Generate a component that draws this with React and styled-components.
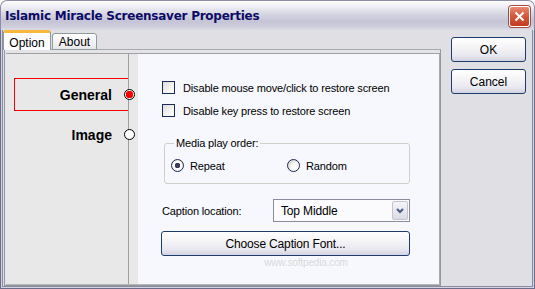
import styled, { createGlobalStyle } from "styled-components";

const GlobalStyle = createGlobalStyle`
  html, body { margin: 0; padding: 0; background: #fff; }
  body { font-family: "Liberation Sans", Arial, sans-serif; font-size: 11px; color: #000; }
  * { box-sizing: border-box; }
`;

const Window = styled.div`
  width: 535px;
  height: 289px;
  display: flex;
  flex-direction: column;
`;

const TitleBar = styled.div`
  height: 30px;
  flex: none;
  display: flex;
  align-items: center;
  justify-content: space-between;
  padding: 0 4px 0 4px;
  border-radius: 7px 7px 0 0;
  border: 1px solid #8e8eaa;
  border-bottom: 0;
  background: linear-gradient(180deg, #fdfdfe 0%, #f0f0f5 18%, #d6d6e2 45%, #c4c4d6 70%, #cfcfdd 90%, #dcdce6 100%);
`;

const Title = styled.span`
  font: bold 12px "DejaVu Sans", Verdana, sans-serif;
  color: #0c0c66;
  letter-spacing: -0.25px;
  margin-top: 1px;
`;

const CloseBtn = styled.div`
  width: 21px;
  height: 21px;
  margin-top: 1px;
  border-radius: 3px;
  border: 1px solid #fff;
  box-shadow: 0 0 0 1px #a84a3c;
  background: linear-gradient(180deg, #e88a74 0%, #d65a40 45%, #c23a20 100%);
  display: flex;
  align-items: center;
  justify-content: center;
`;

const Frame = styled.div`
  flex: 1;
  display: flex;
  border: solid #6c6c8a;
  border-width: 0 1px 1px;
`;

const FrameMid = styled.div`
  flex: 1;
  display: flex;
  border: solid #d4d4e0;
  border-width: 0 1px 1px;
`;

const Client = styled.div`
  flex: 1;
  display: flex;
  gap: 9px;
  background: #e0dfe3;
  border: solid #8a8aa6;
  border-width: 0 1px 1px;
  padding: 1px 0 0 0;
`;

const Main = styled.div`
  width: 439px;
  display: flex;
  flex-direction: column;
`;

const TabRow = styled.div`
  height: 19px;
  display: flex;
  align-items: flex-end;
  position: relative;
  z-index: 1;
  margin-bottom: -1px;
`;

const Tab = styled.div`
  height: ${(p) => (p.$active ? "20px" : "17px")};
  width: ${(p) => p.$w}px;
  margin-right: ${(p) => (p.$active ? "1px" : "0")};
  display: flex;
  align-items: center;
  justify-content: center;
  font-size: 12px;
  padding-top: ${(p) => (p.$active ? "2px" : "1px")};
  border: 1px solid #919b9c;
  border-bottom: ${(p) => (p.$active ? "0" : "1px solid #919b9c")};
  border-radius: 3px 3px 0 0;
  background: ${(p) =>
    p.$active ? "#fcfcfe" : "linear-gradient(180deg, #ffffff, #f3f3f6 60%, #e6e6ea)"};
  border-top: ${(p) => (p.$active ? "3px solid #f7b83c" : "1px solid #919b9c")};
`;

const Panel = styled.div`
  flex: 1;
  margin-left: 1px;
  margin-right: 1px;
  border: 1px solid #919b9c;
  border-top-color: #a6acad;
  background: #e4e3e8;
  padding: 3px 0 0 1px;
  display: flex;
`;

const PageBody = styled.div`
  flex: 1;
  display: flex;
  border-top: 1px solid #a0a0a0;
  border-bottom: 1px solid #b4b4b4;
`;

const Sidebar = styled.div`
  width: 123px;
  background: #e8e8e8;
  border-right: 1px solid #a0a0a0;
  padding: 24px 0 0 8px;
  display: flex;
  flex-direction: column;
  gap: 7px;
`;

const NavItem = styled.div`
  position: relative;
  height: 33px;
  display: flex;
  align-items: center;
  justify-content: flex-end;
  padding-right: 16px;
  font: bold 14px "Liberation Sans", Arial, sans-serif;
  border: 1px solid ${(p) => (p.$active ? "#ff0000" : "transparent")};
  border-right: 0;
`;

const NavDot = styled.span`
  position: absolute;
  right: -7px;
  top: 50%;
  width: 11px;
  height: 11px;
  margin-top: -6px;
  border-radius: 50%;
  border: 1px solid #000;
  background: ${(p) => (p.$active ? "radial-gradient(circle, #ff0000 0 3.5px, #fff 4px)" : "#fff")};
`;

const Strip = styled.div`
  width: 9px;
  background: #e8e8e8;
`;

const Content = styled.div`
  flex: 1;
  background: #f7f8fd;
  border-right: 1px solid #a8a8a8;
  padding: 27px 29px 0 24px;
  display: flex;
  flex-direction: column;
  letter-spacing: -0.15px;
`;

const CheckRow = styled.label`
  display: flex;
  align-items: center;
  gap: 8px;
  height: 13px;
  margin-bottom: 10px;
  font-size: 11px;
`;

const CheckBox = styled.span`
  width: 13px;
  height: 13px;
  border: 1px solid #1c2a5a;
  background: linear-gradient(135deg, #dcdcd8 0%, #f4f4f2 60%, #ffffff 100%);
`;

const Group = styled.fieldset`
  margin: 10px 0 0 2px;
  padding: 9px 0 11px 6px;
  border: 1px solid #d0d0c8;
  border-radius: 3px;
  display: grid;
  grid-template-columns: 116px 1fr;
`;

const Legend = styled.legend`
  padding: 0 2px;
  margin-left: 3px;
  font-size: 11px;
  line-height: 13px;
`;

const RadioRow = styled.label`
  display: flex;
  align-items: center;
  gap: 6px;
  font-size: 11px;
`;

const Radio = styled.span`
  width: 13px;
  height: 13px;
  border-radius: 50%;
  border: 1px solid #1c2a5a;
  background: ${(p) =>
    p.$on
      ? "radial-gradient(circle, #3c3c5a 0 2.5px, #ffffff 3px 4px, #dcdcd8 6px)"
      : "radial-gradient(circle at 65% 65%, #ffffff 0 3px, #dcdcd8 7px)"};
`;

const CaptionRow = styled.div`
  display: flex;
  align-items: center;
  margin-top: 15px;
  font-size: 11px;
`;

const CaptionLabel = styled.span`
  width: 111px;
`;

const Select = styled.div`
  width: 137px;
  height: 23px;
  border: 1px solid #8c8c9c;
  background: #fbfbfd;
  display: flex;
  align-items: center;
  padding: 1px 1px 1px 7px;
  font-size: 12px;
`;

const SelectText = styled.span`
  flex: 1;
`;

const DropBtn = styled.span`
  width: 16px;
  height: 19px;
  border: 1px solid #c4c4d0;
  border-radius: 2px;
  background: linear-gradient(180deg, #f4f4f8, #dcdce6);
  display: flex;
  align-items: center;
  justify-content: center;
`;

const XPButton = styled.div`
  width: ${(p) => p.$w}px;
  height: 25px;
  border: 1px solid #1c3c6c;
  border-radius: 3px;
  background: linear-gradient(180deg, #ffffff 0%, #f6f6f8 35%, #e8e8ef 75%, #d4d4e2 100%);
  display: flex;
  align-items: center;
  justify-content: center;
  font-size: 12px;
  margin-top: ${(p) => p.$mt || 0}px;
  margin-left: ${(p) => p.$ml || 0}px;
`;

const ButtonCol = styled.div`
  display: flex;
  flex-direction: column;
  gap: 7px;
  padding-top: 6px;
`;

const Watermark = styled.div`
  margin-top: 1px;
  align-self: center;
  margin-left: 40px;
  color: #d8d8dc;
  font-size: 10px;
`;

export default function App() {
  return (
    <>
      <GlobalStyle />
      <Window>
        <TitleBar>
          <Title>Islamic Miracle Screensaver Properties</Title>
          <CloseBtn>
            <svg width="11" height="11" viewBox="0 0 11 11">
              <path d="M1.5 1.5 L9.5 9.5 M9.5 1.5 L1.5 9.5" stroke="#fff" strokeWidth="2" />
            </svg>
          </CloseBtn>
        </TitleBar>
        <Frame>
          <FrameMid>
            <Client>
              <Main>
                <TabRow>
                  <Tab $active $w={48}>Option</Tab>
                  <Tab $w={45}>About</Tab>
                </TabRow>
                <Panel>
                  <PageBody>
                    <Sidebar>
                      <NavItem $active>
                        General
                        <NavDot $active />
                      </NavItem>
                      <NavItem>
                        Image
                        <NavDot />
                      </NavItem>
                    </Sidebar>
                    <Strip />
                    <Content>
                      <CheckRow>
                        <CheckBox />
                        Disable mouse move/click to restore screen
                      </CheckRow>
                      <CheckRow>
                        <CheckBox />
                        Disable key press to restore screen
                      </CheckRow>
                      <Group>
                        <Legend>Media play order:</Legend>
                        <RadioRow>
                          <Radio $on />
                          Repeat
                        </RadioRow>
                        <RadioRow>
                          <Radio />
                          Random
                        </RadioRow>
                      </Group>
                      <CaptionRow>
                        <CaptionLabel>Caption location:</CaptionLabel>
                        <Select>
                          <SelectText>Top Middle</SelectText>
                          <DropBtn>
                            <svg width="8" height="6" viewBox="0 0 8 6">
                              <path d="M1 1 L4 4 L7 1" stroke="#4a5c84" strokeWidth="2" fill="none" />
                            </svg>
                          </DropBtn>
                        </Select>
                      </CaptionRow>
                      <XPButton $w={249} $mt={9} $ml={-1}>Choose Caption Font...</XPButton>
                      <Watermark>www.softpedia.com</Watermark>
                    </Content>
                  </PageBody>
                </Panel>
              </Main>
              <ButtonCol>
                <XPButton $w={75}>OK</XPButton>
                <XPButton $w={75}>Cancel</XPButton>
              </ButtonCol>
            </Client>
          </FrameMid>
        </Frame>
      </Window>
    </>
  );
}
